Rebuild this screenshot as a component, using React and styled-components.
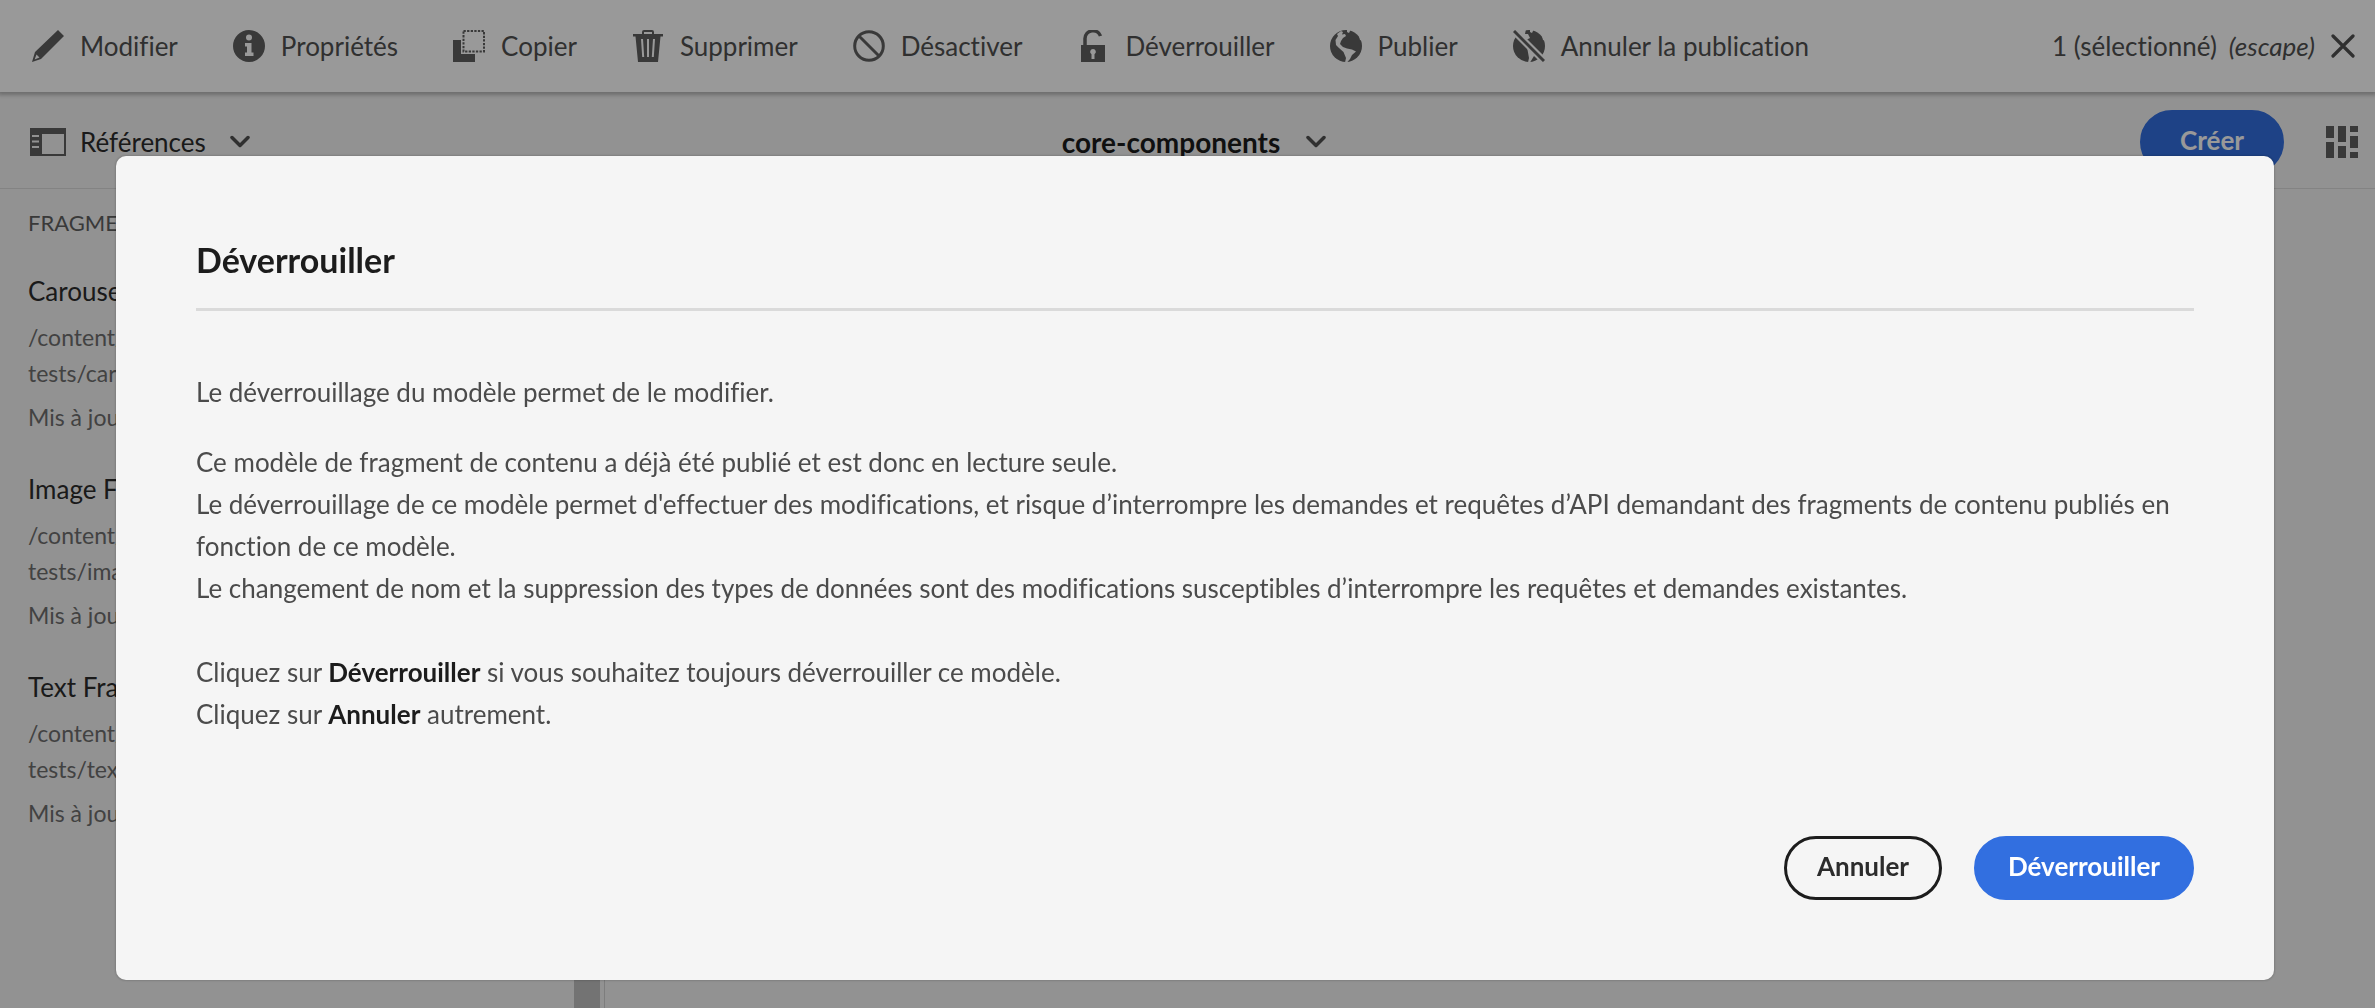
import React from 'react';
import styled, { createGlobalStyle } from 'styled-components';

const GlobalStyle = createGlobalStyle`
  *, *::before, *::after { box-sizing: border-box; }
  body {
    margin: 0;
    background: #f4f4f4;
    color: #505050;
    font-family: Lato, "Noto Sans", sans-serif;
    font-size: 26px;
    line-height: 32px;
    font-variant-ligatures: none;
  }
  button { font: inherit; color: inherit; cursor: pointer; }
`;

const Page = styled.div`
  display: flex;
  flex-direction: column;
  height: 100vh;
  overflow: hidden;
`;

const ActionBar = styled.header`
  display: flex;
  align-items: center;
  justify-content: space-between;
  height: 92px;
  padding: 0 20px 0 32px;
  background: #ffffff;
  box-shadow: 0 1px 4px 2px rgba(0, 0, 0, 0.26);
  z-index: 1;
`;

const Actions = styled.div`
  display: flex;
  align-items: center;
  gap: 55px;
`;

const PlainButton = styled.button`
  display: flex;
  align-items: center;
  gap: ${(p) => p.$gap || 16}px;
  padding: 0;
  border: 0;
  background: none;
  color: ${(p) => (p.$dark ? '#2c2c2c' : '#505050')};
  white-space: nowrap;
`;

const Selection = styled.span`
  display: flex;
  gap: 12px;
`;

const PathButton = styled(PlainButton)`
  color: #1c1c1c;
  font-size: 28px;
  font-weight: 700;
`;

const Icon = styled.svg`
  display: block;
  flex: none;
  width: ${(p) => p.$w || 32}px;
  height: ${(p) => p.$h || 32}px;
  fill: ${(p) => (p.$stroke ? 'none' : '#606060')};
  stroke: ${(p) => (p.$stroke ? '#505050' : 'none')};
`;

const ChevronIcon = styled(Icon)`
  margin-left: 10px;
`;

const SubBar = styled.div`
  display: grid;
  grid-template-columns: 1fr auto 1fr;
  align-items: center;
  height: 97px;
  padding: 4px 17px 0 30px;
  border-bottom: 1px solid #dadada;
`;

const SubEnd = styled.div`
  display: flex;
  align-items: center;
  justify-content: flex-end;
  gap: 42px;
`;

const Pill = styled.button`
  height: 64px;
  min-width: ${(p) => p.$min}px;
  padding: 0 28px 4px;
  border: 3px solid ${(p) => (p.$primary ? '#326fe0' : '#1c1c1c')};
  border-radius: 32px;
  background: ${(p) => (p.$primary ? '#326fe0' : 'transparent')};
  color: ${(p) => (p.$primary ? '#ffffff' : '#2c2c2c')};
  font-weight: 700;
  white-space: nowrap;
`;

const Workspace = styled.div`
  display: flex;
  flex: 1;
  min-height: 0;
`;

const Rail = styled.aside`
  display: flex;
  width: 605px;
  border-right: 1px solid #d0d0d0;
  gap: 4px;
  padding-right: 4px;
`;

const RailContent = styled.div`
  flex: 1;
  padding: 16px 28px;
`;

const RailTrack = styled.div`
  width: 26px;
  background: #c0c0c0;
`;

const RailHeading = styled.h2`
  margin: 0 0 32px;
  font-size: 22px;
  line-height: 36px;
  font-weight: 400;
  color: #606060;
  text-transform: uppercase;
`;

const References = styled.ul`
  display: flex;
  flex-direction: column;
  gap: 36px;
  margin: 0;
  padding: 0;
  list-style: none;
`;

const RefTitle = styled.h3`
  margin: 0 0 10px;
  font-size: 26px;
  line-height: 36px;
  font-weight: 400;
  color: #2c2c2c;
`;

const RefText = styled.p`
  margin: 0 0 ${(p) => (p.$spaced ? 8 : 0)}px;
  font-size: 23px;
  line-height: 36px;
  color: #6e6e6e;
`;

const Backdrop = styled.div`
  position: fixed;
  inset: 0;
  z-index: 2;
  padding: 156px 101px 28px 116px;
  background: rgba(0, 0, 0, 0.4);
`;

const Dialog = styled.section`
  padding: 80px;
  border-radius: 10px;
  background: #f5f5f5;
  box-shadow: 0 0 2px 1px rgba(0, 0, 0, 0.15);
`;

const DialogTitle = styled.h1`
  margin: 0;
  padding-bottom: 24px;
  border-bottom: 3px solid #dadada;
  color: #1c1c1c;
  font-size: 34px;
  line-height: 48px;
  font-weight: 700;
`;

const DialogBody = styled.div`
  display: flex;
  flex-direction: column;
  padding: 60px 0 101px;
  color: #4b4b4b;
  line-height: 42px;
`;

const Paragraph = styled.p`
  margin: 0 0 ${(p) => p.$after || 0}px;

  strong { color: #1c1c1c; }
`;

const DialogFooter = styled.footer`
  display: flex;
  justify-content: flex-end;
  gap: 32px;
`;

const icons = {
  edit: <path fillRule="evenodd" d="M26 0L32 6L9 29L0 32L3 22ZM4.500 24.500L2.600 29.400L7.500 27.600Z" />,
  info: (
    <path
      fillRule="evenodd"
      d="M16 0a16 16 0 1 0 0 32a16 16 0 0 0 0-32ZM16 4.500a3 3 0 1 1 0 6a3 3 0 0 1 0-6ZM12 13h6.500v9.500H20.500V26H12v-3.500h2V16.500h-2Z"
    />
  ),
  copy: (
    <>
      <path d="M0 10h8v14h14v8H0Z" />
      <path d="M10.500 1H31V21.500H10.500Z" fill="none" stroke="#606060" strokeWidth="2" strokeDasharray="2.300 1.300" />
    </>
  ),
  trash: (
    <path
      fillRule="evenodd"
      d="M10 4V2a2 2 0 0 1 2-2h8a2 2 0 0 1 2 2v2h9v2.500h-2.500L26 32H6L3.500 6.500H1V4ZM12 2v2h8V2ZM9 9l1.200 18h2L11 9ZM15 9v18h2V9ZM21 9l-1.200 18h2L23 9Z"
    />
  ),
  block: <path d="M16 1.700a14.300 14.300 0 1 0 0 28.600a14.300 14.300 0 0 0 0-28.600M6 6L26 26" fill="none" stroke="#606060" strokeWidth="3" />,
  unlock: (
    <>
      <path fillRule="evenodd" d="M4 15h24v17H4ZM16 19a2.800 2.800 0 0 0-1.500 5.200V29h3v-4.800A2.800 2.800 0 0 0 16 19Z" />
      <path d="M8 16V8.500a8 8 0 0 1 15.500-2.500" fill="none" stroke="#606060" strokeWidth="3.500" />
    </>
  ),
  globe: (
    <>
      <circle cx="16" cy="16" r="16" />
      <path
        d="M7 4L11 1L13 2L12 4.500L15 4L16 6L13 8L11 11L10 14L13 17L17 18.500L22 19.500L26 21.500L22 25L20 29L17 32.500L15 32.500L16 28L13.500 22L9 18L6 15L5.500 10L8 6Z"
        fill="#ffffff"
      />
      <path d="M17 -1L21 -1L19 3L17 2ZM29 6L33 8V11L30 10Z" fill="#ffffff" />
    </>
  ),
  unpublish: (
    <>
      <circle cx="16" cy="16" r="16" />
      <path d="M7 0L13 -1L12 4L15 4L17 8L13 10L7 5ZM14 17L23 22L21 26L17 32.500H15L16 28Z" fill="#ffffff" />
      <path d="M17 -1L21 -1L19 3L17 2ZM29 6L33 8V11L30 10Z" fill="#ffffff" />
      <path d="M-1 -1L33 33" stroke="#ffffff" strokeWidth="7" />
      <path d="M1 1L31 31" stroke="#606060" strokeWidth="3" />
    </>
  ),
};

const ACTIONS = [
  ['edit', 'Modifier'],
  ['info', 'Propriétés'],
  ['copy', 'Copier'],
  ['trash', 'Supprimer'],
  ['block', 'Désactiver'],
  ['unlock', 'Déverrouiller'],
  ['globe', 'Publier'],
  ['unpublish', 'Annuler la publication'],
];

const REFERENCES = [
  { title: 'Carousel', path: 'tests/carousel' },
  { title: 'Image Fragment', path: 'tests/image' },
  { title: 'Text Fragment', path: 'tests/text' },
];

const Chevron = () => (
  <ChevronIcon $stroke $w={20} $h={14} viewBox="0 0 20 14" aria-hidden="true">
    <path d="M2 2.500L10 10.500L18 2.500" strokeWidth="3.500" strokeLinecap="round" strokeLinejoin="round" />
  </ChevronIcon>
);

export default function App() {
  return (
    <>
      <GlobalStyle />
      <Page>
        <ActionBar>
          <Actions>
            {ACTIONS.map(([icon, label]) => (
              <PlainButton key={icon} type="button">
                <Icon viewBox="0 0 32 32" aria-hidden="true">{icons[icon]}</Icon>
                {label}
              </PlainButton>
            ))}
          </Actions>
          <PlainButton type="button">
            <Selection>
              <span>1 (sélectionné)</span>
              <em>(escape)</em>
            </Selection>
            <Icon $stroke $w={24} $h={24} viewBox="0 0 24 24" aria-hidden="true">
              <path d="M2 2L22 22M22 2L2 22" strokeWidth="3.200" strokeLinecap="round" />
            </Icon>
          </PlainButton>
        </ActionBar>

        <SubBar>
          <PlainButton type="button" $dark $gap={14}>
            <Icon $w={36} $h={28} viewBox="0 0 36 28" aria-hidden="true">
              <path
                fillRule="evenodd"
                d="M0 0H36V28H0ZM12 6V26H34V6ZM2 7V9H9V7ZM2 12.500V14.500H9V12.500ZM2 18V20H9V18Z"
              />
            </Icon>
            Références
            <Chevron />
          </PlainButton>
          <PathButton type="button">
            core-components
            <Chevron />
          </PathButton>
          <SubEnd>
            <Pill type="button" $primary $min={144}>Créer</Pill>
            <PlainButton type="button" aria-label="Affichage">
              <Icon viewBox="0 0 32 32" aria-hidden="true">
                <path d="M0 0h8v12H0ZM0 16h8v16H0ZM12 0h8v16h-8ZM12 20h8v12h-8ZM24 0h8v6h-8ZM24 10h8v12h-8ZM24 26h8v6h-8Z" />
              </Icon>
            </PlainButton>
          </SubEnd>
        </SubBar>

        <Workspace>
          <Rail>
            <RailContent>
              <RailHeading>Fragments</RailHeading>
              <References>
                {REFERENCES.map((r) => (
                  <li key={r.title}>
                    <RefTitle>{r.title}</RefTitle>
                    <RefText>/content/dam</RefText>
                    <RefText $spaced>{r.path}</RefText>
                    <RefText>Mis à jour</RefText>
                  </li>
                ))}
              </References>
            </RailContent>
            <RailTrack />
          </Rail>
        </Workspace>
      </Page>

      <Backdrop>
        <Dialog role="dialog" aria-modal="true" aria-labelledby="dialog-title">
          <DialogTitle id="dialog-title">Déverrouiller</DialogTitle>
          <DialogBody>
            <Paragraph $after={28}>Le déverrouillage du modèle permet de le modifier.</Paragraph>
            <Paragraph>Ce modèle de fragment de contenu a déjà été publié et est donc en lecture seule.</Paragraph>
            <Paragraph>
              Le déverrouillage de ce modèle permet d'effectuer des modifications, et risque d’interrompre les demandes
              et requêtes d’API demandant des fragments de contenu publiés en fonction de ce modèle.
            </Paragraph>
            <Paragraph $after={42}>
              Le changement de nom et la suppression des types de données sont des modifications susceptibles
              d’interrompre les requêtes et demandes existantes.
            </Paragraph>
            <Paragraph>
              Cliquez sur <strong>Déverrouiller</strong> si vous souhaitez toujours déverrouiller ce modèle.
            </Paragraph>
            <Paragraph>
              Cliquez sur <strong>Annuler</strong> autrement.
            </Paragraph>
          </DialogBody>
          <DialogFooter>
            <Pill type="button" $min={158}>Annuler</Pill>
            <Pill type="button" $primary $min={220}>Déverrouiller</Pill>
          </DialogFooter>
        </Dialog>
      </Backdrop>
    </>
  );
}
